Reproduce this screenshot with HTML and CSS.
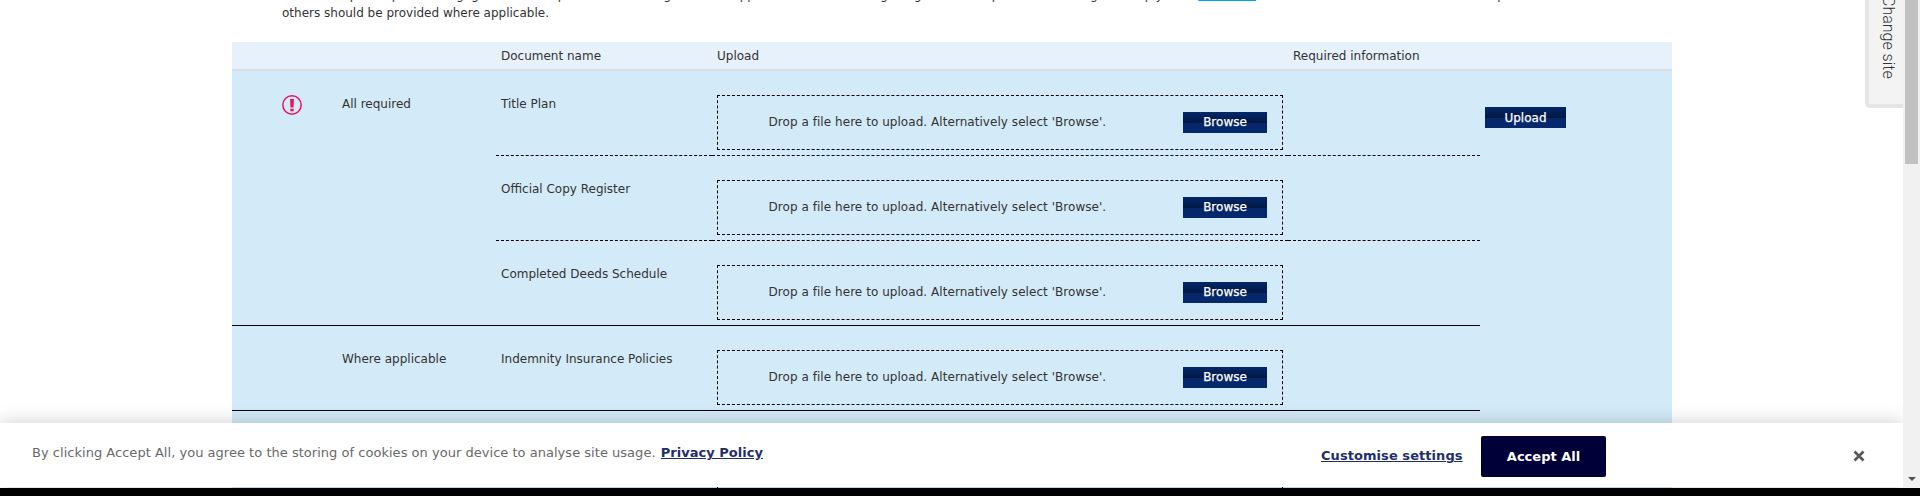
FILE: index.html
```html
<!DOCTYPE html>
<html lang="en"><head><meta charset="utf-8"><title>Document upload</title><link rel="stylesheet" href="styles.css"></head>
<body>
<main class="page">
<p class="intro">All the completed plans mortgage and all the provided recording the deed applied to the lender lodged against these plots and the original simply from <a class="link">click here</a> and then all of the other title and deed provided<br>others should be provided where applicable.</p>
<section class="table">
<div class="head"><span></span><span></span><span>Document name</span><span>Upload</span><span>Required information</span></div>
<div class="body">
<div class="groups">
<div class="group">
<svg class="alert" viewBox="0 0 20 20"><circle cx="10" cy="10" r="9.2"/><path d="M8 4h4l-.5 8.5h-3zM8.3 13.8h3.4v2.5H8.3z"/></svg>
<div class="status">All required</div>
<div class="docs">
<div class="doc"><span class="name">Title Plan</span><div class="upload"><div class="drop"><span>Drop a file here to upload. Alternatively select 'Browse'.</span><button class="btn browse">Browse</button></div></div><span class="info"></span></div>
<div class="doc"><span class="name">Official Copy Register</span><div class="upload"><div class="drop"><span>Drop a file here to upload. Alternatively select 'Browse'.</span><button class="btn browse">Browse</button></div></div><span class="info"></span></div>
<div class="doc"><span class="name">Completed Deeds Schedule</span><div class="upload"><div class="drop"><span>Drop a file here to upload. Alternatively select 'Browse'.</span><button class="btn browse">Browse</button></div></div><span class="info"></span></div>
</div></div>
<div class="group"><span></span>
<div class="status">Where applicable</div>
<div class="docs">
<div class="doc"><span class="name">Indemnity Insurance Policies</span><div class="upload"><div class="drop"><span>Drop a file here to upload. Alternatively select 'Browse'.</span><button class="btn browse">Browse</button></div></div><span class="info"></span></div>
</div></div>
<div class="group"><span></span><div class="status"></div><div class="docs"><div class="doc"><span class="name"></span><div class="upload"><div class="drop tall"></div></div><span class="info"></span></div></div></div>
</div>
<button class="btn submit">Upload</button>
</div>
</section>
</main>
<aside class="tab"><span>Change site</span></aside>
<div class="cookies">
<p class="notice">By clicking Accept All, you agree to the storing of cookies on your device to analyse site usage. <a>Privacy Policy</a></p>
<a class="customise">Customise settings</a><button class="accept">Accept All</button>
<svg class="close" viewBox="0 0 12 12"><path d="M1.5 1.5l9 9M10.5 1.5l-9 9"/></svg>
</div>
<div class="scroll"><div class="thumb"></div><i class="arrow"></i></div>
<div class="strip"></div>
</body></html>
```
FILE: styles.css
```css
*{box-sizing:border-box}
body{margin:0;height:496px;overflow:hidden;position:relative;background:#fff;color:#333;font:12px/18px Verdana,"DejaVu Sans",sans-serif}
button{border:0;margin:0;padding:0;font-family:inherit}
.page{width:1440px;height:488px;margin-left:232px;overflow:hidden}
.intro{margin:-14px 0 0;padding-left:50px;height:56px;white-space:nowrap}
.link{color:#00a4e4;text-decoration:underline;text-decoration-thickness:1px}
.intro::first-line{line-height:18px}
.head{height:29px;background:#e6f1fb;border-bottom:2px solid #ddd;display:grid;grid-template-columns:110px 159px 216px 576px 1fr;line-height:29px}
.body{display:flex;align-items:flex-start;background:#d3eaf8}
.groups{width:1248px}
.group{display:grid;grid-template-columns:110px 154px 984px;border-bottom:1px solid #000}
.alert{width:20px;height:20px;margin:24px 0 0 50px;fill:#ed145b}
.alert circle{fill:none;stroke:#ed145b;stroke-width:1.5}
.status{padding-top:24px}
.doc{display:grid;grid-template-columns:216px 576px 192px;height:85px}
.doc:last-child{height:84px}
.doc>*{border-bottom:1px dashed #000}
.doc:last-child>*{border-bottom:0}
.name{padding:24px 0 0 5px}
.upload{padding:24px 5px 0}
.drop{height:55px;border:1px dashed #000;display:flex;justify-content:space-between;align-items:center;padding:0 15px 1px 50.5px;letter-spacing:.05px}
.drop.tall{height:90px}
.btn{height:21px;color:#fff;font-size:12px;line-height:21px;-webkit-text-stroke:.25px #fff;background:linear-gradient(#04286b 0,#001742 11px,#04286b 11px)}
.browse{width:84px}
.submit{width:81px;margin:36px 0 0 5px;padding-top:1px}
.tab{position:absolute;right:17px;top:-20px;width:38px;height:128px;border:solid #e5e5e5;border-width:4px 0 4px 4px;border-radius:5px 0 0 5px;background:#f3f3f3;font:300 16px/20px Roboto,sans-serif}
.tab span{position:absolute;writing-mode:vertical-rl;left:9px;bottom:25px;white-space:nowrap}
.cookies{position:absolute;left:0;top:423px;width:1903px;height:64px;background:#fff;box-shadow:0 0 18px rgba(0,0,0,.2);display:flex;align-items:center;font-size:13px}
.notice{margin:0 0 4px 32px;width:1289px;color:#696969;white-space:nowrap;letter-spacing:.025px}
.cookies a{color:#1f2f6b;font-weight:700;text-decoration:underline}
.notice a{margin-left:1px}
.customise{width:160px;white-space:nowrap;letter-spacing:.06px;padding-top:2px}
.accept{width:125px;height:41px;background:#000039;color:#fff;font-size:13px;font-weight:700;border-radius:2px;margin-top:3px}
.close{width:12px;height:12px;margin:1px 0 0 247px;stroke:#565656;stroke-width:2.6}
.scroll{position:absolute;right:0;top:0;width:17px;height:488px;background:#f1f1f1}
.thumb{height:164px;width:13px;margin-left:2px;background:#c1c1c1}
.arrow{position:absolute;left:5px;bottom:7px;border:4px solid transparent;border-top-color:#505050;border-bottom:0}
.strip{position:absolute;left:0;right:0;bottom:0;height:8px;background:#000}
```
